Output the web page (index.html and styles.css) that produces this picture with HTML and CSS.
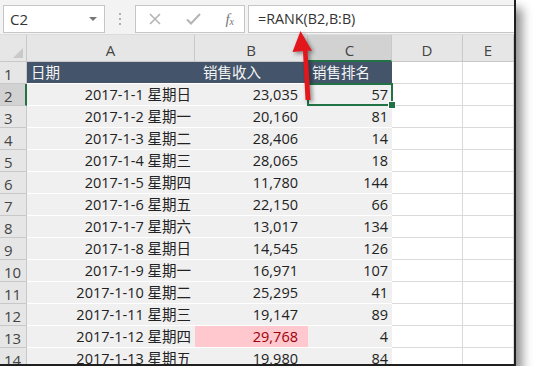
FILE: index.html
```html
<!DOCTYPE html>
<html lang="zh">
<head>
<meta charset="utf-8">
<title>RANK</title>
<link rel="stylesheet" href="styles.css">
</head>
<body>
<div class="window">
  <div class="fbar">
    <div class="namebox"><span class="nb-text">C2</span><span class="nb-arrow"></span></div>
    <div class="dots"><i></i><i></i><i></i></div>
    <div class="fbtns">
      <svg class="ic-x" width="12" height="12" viewBox="0 0 12 12"><path d="M1 1 L11 11 M11 1 L1 11" stroke="#b4b4b4" stroke-width="1.6" fill="none"/></svg>
      <svg class="ic-ok" width="15" height="12" viewBox="0 0 15 12"><path d="M1 6.5 L5 10.5 L14 1" stroke="#b4b4b4" stroke-width="2" fill="none"/></svg>
      <span class="fx">f<sub>x</sub></span>
    </div>
    <div class="formula">=RANK(B2,B:B)</div>
  </div>
  <div class="sheet">
    <div class="corner"><span class="tri"></span></div>
    <div class="ch">A</div><div class="ch">B</div><div class="ch sel">C</div><div class="ch">D</div><div class="ch">E</div>

    <div class="rh">1</div><div class="th">日期</div><div class="th thb">销售收入</div><div class="th">销售排名</div><div class="e"></div><div class="e"></div>
    <div class="rh sel">2</div><div class="c">2017-1-1 星期日</div><div class="c b">23,035</div><div class="c active">57</div><div class="e"></div><div class="e"></div>
    <div class="rh">3</div><div class="c">2017-1-2 星期一</div><div class="c b">20,160</div><div class="c">81</div><div class="e"></div><div class="e"></div>
    <div class="rh">4</div><div class="c">2017-1-3 星期二</div><div class="c b">28,406</div><div class="c">14</div><div class="e"></div><div class="e"></div>
    <div class="rh">5</div><div class="c">2017-1-4 星期三</div><div class="c b">28,065</div><div class="c">18</div><div class="e"></div><div class="e"></div>
    <div class="rh">6</div><div class="c">2017-1-5 星期四</div><div class="c b">11,780</div><div class="c">144</div><div class="e"></div><div class="e"></div>
    <div class="rh">7</div><div class="c">2017-1-6 星期五</div><div class="c b">22,150</div><div class="c">66</div><div class="e"></div><div class="e"></div>
    <div class="rh">8</div><div class="c">2017-1-7 星期六</div><div class="c b">13,017</div><div class="c">134</div><div class="e"></div><div class="e"></div>
    <div class="rh">9</div><div class="c">2017-1-8 星期日</div><div class="c b">14,545</div><div class="c">126</div><div class="e"></div><div class="e"></div>
    <div class="rh">10</div><div class="c">2017-1-9 星期一</div><div class="c b">16,971</div><div class="c">107</div><div class="e"></div><div class="e"></div>
    <div class="rh">11</div><div class="c">2017-1-10 星期二</div><div class="c b">25,295</div><div class="c">41</div><div class="e"></div><div class="e"></div>
    <div class="rh">12</div><div class="c">2017-1-11 星期三</div><div class="c b">19,147</div><div class="c">89</div><div class="e"></div><div class="e"></div>
    <div class="rh">13</div><div class="c">2017-1-12 星期四</div><div class="c b hi">29,768</div><div class="c">4</div><div class="e"></div><div class="e"></div>
    <div class="rh">14</div><div class="c">2017-1-13 星期五</div><div class="c b">19,980</div><div class="c">84</div><div class="e"></div><div class="e"></div>
  </div>
  <svg class="arrow" width="40" height="80" viewBox="0 0 40 80">
    <path d="M20.5 1 L32 21 L27.5 20.5 L30.5 70 L25.5 70 L23 21 L12.5 22 Z" fill="#e3161c"/>
  </svg>
</div>
</body>
</html>
```
FILE: styles.css
```css
* { box-sizing: border-box; }
body { margin: 0; background: #fff; }

.window {
  position: relative;
  width: 516px;
  height: 366px;
  background: #fff;
  border-right: 2px solid #1f1f1f;
  border-bottom: 2px solid #1f1f1f;
  box-shadow: 6px 8px 10px rgba(0, 0, 0, 0.45);
  overflow: hidden;
}

.fbar {
  height: 35px;
  background: #f3f3f3;
  display: flex;
  align-items: flex-start;
  padding: 5px 0 0 3px;
  border-bottom: 1px solid #dcdcdc;
}

.namebox {
  width: 102px;
  height: 28px;
  background: #fff;
  border: 1px solid #c6c6c6;
  display: flex;
  align-items: center;
  justify-content: space-between;
  padding: 0 7px 0 6px;
}
.nb-text { font: 15px "Open Sans", sans-serif; color: #333; }
.nb-arrow {
  width: 0; height: 0;
  border-left: 4px solid transparent;
  border-right: 4px solid transparent;
  border-top: 4px solid #777;
}

.dots {
  width: 30px;
  height: 28px;
  display: flex;
  flex-direction: column;
  align-items: center;
  justify-content: center;
  gap: 3px;
}
.dots i { display: block; width: 2px; height: 2px; background: #b0b0b0; }

.fbtns {
  width: 110px;
  height: 28px;
  background: #fff;
  border: 1px solid #c6c6c6;
  display: flex;
  align-items: center;
  padding: 0 10px 0 13px;
  justify-content: space-between;
}
.fx { font: italic 15px "Liberation Serif", serif; color: #777; }
.fx sub { font-size: 10px; vertical-align: -1px; }

.formula {
  margin-left: 3px;
  flex: 1;
  height: 28px;
  background: #fff;
  border: 1px solid #c6c6c6;
  border-right: none;
  font: 14.3px "Open Sans", sans-serif;
  color: #333;
  line-height: 26px;
  padding-left: 9px;
}

.sheet {
  display: grid;
  grid-template-columns: 27px 168px 113px 84px 71px 51px;
  grid-template-rows: 27px repeat(14, 22px);
  font: 14.5px "Open Sans", "Noto Sans CJK SC", sans-serif;
  color: #222;
}

.corner {
  background: #e6e6e6;
  border-right: 1px solid #c8c8c8;
  border-bottom: 1px solid #c8c8c8;
  position: relative;
}
.tri {
  position: absolute;
  right: 3px; bottom: 3px;
  width: 0; height: 0;
  border-left: 10px solid transparent;
  border-bottom: 10px solid #c9c9c9;
}

.ch {
  background: #e6e6e6;
  border-right: 1px solid #c8c8c8;
  border-bottom: 1px solid #c8c8c8;
  text-align: center;
  font: 15px "Open Sans", sans-serif;
  color: #444;
  line-height: 30px;
}
.ch.sel { background: #d2d2d2; border-bottom: 2px solid #217346; }

.rh {
  background: #e6e6e6;
  border-right: 1px solid #c8c8c8;
  border-bottom: 1px solid #c8c8c8;
  font: 15px "Open Sans", sans-serif;
  color: #444;
  padding-left: 4px;
  line-height: 24px;
}
.rh.sel { background: #d2d2d2; border-right: 2px solid #217346; }

.th {
  background: #44546a;
  color: #f4f4f4;
  padding-left: 4px;
  line-height: 22px;
  border-bottom: 1px solid #fff;
}
.thb { padding-left: 8px; }

.c {
  background: #f0f0f0;
  border-bottom: 1px solid #fff;
  text-align: right;
  padding-right: 4px;
  line-height: 22px;
  white-space: nowrap;
}
.c.b { padding-right: 10px; }
.c.hi { background: #ffc7ce; color: #9c0006; }

.c.active { position: relative; }
.c.active::after {
  content: "";
  position: absolute;
  left: -1px; top: -1px; right: -1px; bottom: -1px;
  border: 2px solid #217346;
}
.c.active::before {
  content: "";
  position: absolute;
  right: -4px; bottom: -4px;
  width: 6px; height: 6px;
  background: #217346;
  border: 1px solid #fff;
  z-index: 2;
}

.e {
  background: #fff;
  border-right: 1px solid #dadada;
  border-bottom: 1px solid #dadada;
}

.arrow {
  position: absolute;
  left: 280px;
  top: 30px;
  filter: drop-shadow(2px 2px 2px rgba(0, 0, 0, 0.45));
}
```
